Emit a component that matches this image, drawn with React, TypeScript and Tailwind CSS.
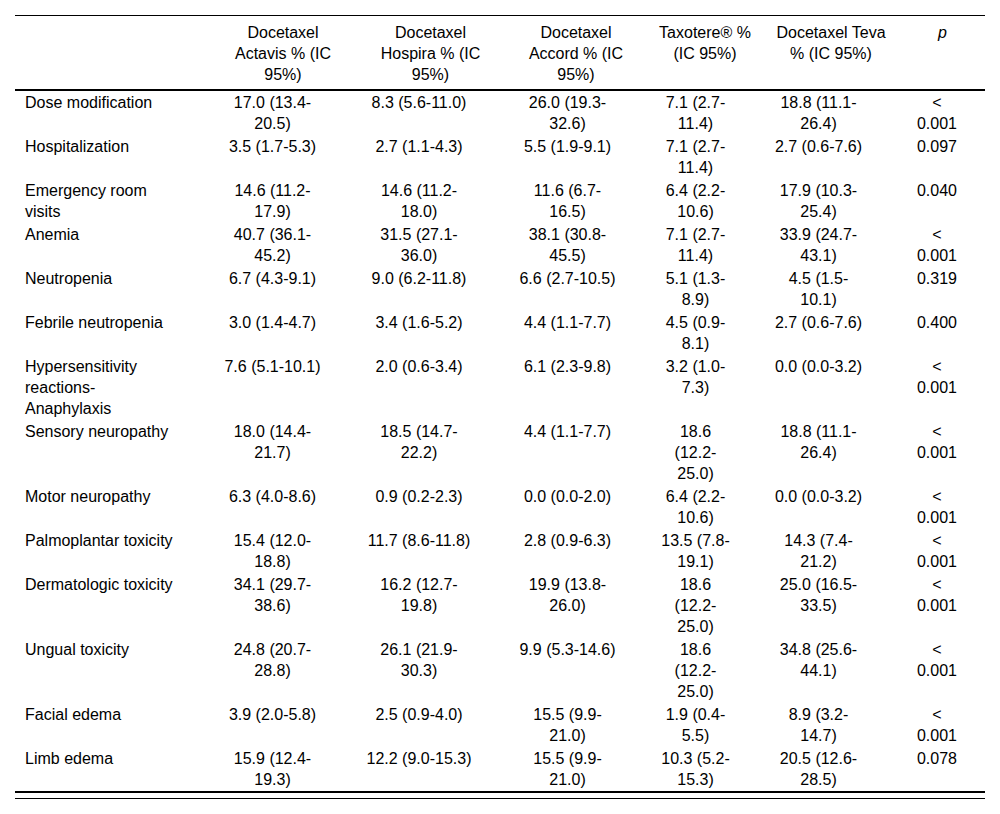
import React from "react";

type Row = string[][];

const header: string[][] = [
  [],
  ["Docetaxel", "Actavis % (IC", "95%)"],
  ["Docetaxel", "Hospira % (IC", "95%)"],
  ["Docetaxel", "Accord % (IC", "95%)"],
  ["Taxotere® %", "(IC 95%)"],
  ["Docetaxel Teva", "% (IC 95%)"],
];

const rows: Row[] = [
  [["Dose modification"], ["17.0 (13.4-", "20.5)"], ["8.3 (5.6-11.0)"], ["26.0 (19.3-", "32.6)"], ["7.1 (2.7-", "11.4)"], ["18.8 (11.1-", "26.4)"], ["<", "0.001"]],
  [["Hospitalization"], ["3.5 (1.7-5.3)"], ["2.7 (1.1-4.3)"], ["5.5 (1.9-9.1)"], ["7.1 (2.7-", "11.4)"], ["2.7 (0.6-7.6)"], ["0.097"]],
  [["Emergency room", "visits"], ["14.6 (11.2-", "17.9)"], ["14.6 (11.2-", "18.0)"], ["11.6 (6.7-", "16.5)"], ["6.4 (2.2-", "10.6)"], ["17.9 (10.3-", "25.4)"], ["0.040"]],
  [["Anemia"], ["40.7 (36.1-", "45.2)"], ["31.5 (27.1-", "36.0)"], ["38.1 (30.8-", "45.5)"], ["7.1 (2.7-", "11.4)"], ["33.9 (24.7-", "43.1)"], ["<", "0.001"]],
  [["Neutropenia"], ["6.7 (4.3-9.1)"], ["9.0 (6.2-11.8)"], ["6.6 (2.7-10.5)"], ["5.1 (1.3-", "8.9)"], ["4.5 (1.5-", "10.1)"], ["0.319"]],
  [["Febrile neutropenia"], ["3.0 (1.4-4.7)"], ["3.4 (1.6-5.2)"], ["4.4 (1.1-7.7)"], ["4.5 (0.9-", "8.1)"], ["2.7 (0.6-7.6)"], ["0.400"]],
  [["Hypersensitivity", "reactions-", "Anaphylaxis"], ["7.6 (5.1-10.1)"], ["2.0 (0.6-3.4)"], ["6.1 (2.3-9.8)"], ["3.2 (1.0-", "7.3)"], ["0.0 (0.0-3.2)"], ["<", "0.001"]],
  [["Sensory neuropathy"], ["18.0 (14.4-", "21.7)"], ["18.5 (14.7-", "22.2)"], ["4.4 (1.1-7.7)"], ["18.6", "(12.2-", "25.0)"], ["18.8 (11.1-", "26.4)"], ["<", "0.001"]],
  [["Motor neuropathy"], ["6.3 (4.0-8.6)"], ["0.9 (0.2-2.3)"], ["0.0 (0.0-2.0)"], ["6.4 (2.2-", "10.6)"], ["0.0 (0.0-3.2)"], ["<", "0.001"]],
  [["Palmoplantar toxicity"], ["15.4 (12.0-", "18.8)"], ["11.7 (8.6-11.8)"], ["2.8 (0.9-6.3)"], ["13.5 (7.8-", "19.1)"], ["14.3 (7.4-", "21.2)"], ["<", "0.001"]],
  [["Dermatologic toxicity"], ["34.1 (29.7-", "38.6)"], ["16.2 (12.7-", "19.8)"], ["19.9 (13.8-", "26.0)"], ["18.6", "(12.2-", "25.0)"], ["25.0 (16.5-", "33.5)"], ["<", "0.001"]],
  [["Ungual toxicity"], ["24.8 (20.7-", "28.8)"], ["26.1 (21.9-", "30.3)"], ["9.9 (5.3-14.6)"], ["18.6", "(12.2-", "25.0)"], ["34.8 (25.6-", "44.1)"], ["<", "0.001"]],
  [["Facial edema"], ["3.9 (2.0-5.8)"], ["2.5 (0.9-4.0)"], ["15.5 (9.9-", "21.0)"], ["1.9 (0.4-", "5.5)"], ["8.9 (3.2-", "14.7)"], ["<", "0.001"]],
  [["Limb edema"], ["15.9 (12.4-", "19.3)"], ["12.2 (9.0-15.3)"], ["15.5 (9.9-", "21.0)"], ["10.3 (5.2-", "15.3)"], ["20.5 (12.6-", "28.5)"], ["0.078"]],
];

function Cell({ lines, left }: { lines: string[]; left?: boolean }) {
  return (
    <div className={left ? "pl-[10px] text-left" : "text-center"}>
      {lines.map((line, i) => (
        <div key={i} className="whitespace-nowrap">
          {line}
        </div>
      ))}
    </div>
  );
}

export default function App() {
  return (
    <div className="min-h-[814px] bg-white px-[15px] pt-[15px] font-['Liberation_Sans',Arial,sans-serif] text-[16px] leading-[21px] text-black">
      <div className="border-t border-black">
        {/* Header */}
        <div className="grid grid-cols-[194px_148px_147px_144px_114px_138px_85px] border-b-2 border-black pt-[6px] pb-[4px]">
          {header.map((lines, i) => (
            <Cell key={i} lines={lines} />
          ))}
          <div className="text-center italic">p</div>
        </div>

        {/* Body */}
        {rows.map((row, r) => (
          <div
            key={r}
            className="grid grid-cols-[184px_147px_146px_151px_105px_141px_96px] py-[1px]"
          >
            {row.map((lines, c) => (
              <Cell key={c} lines={lines} left={c === 0} />
            ))}
          </div>
        ))}

        <div className="h-[8px] border-t-2 border-b border-black" />
      </div>
    </div>
  );
}
